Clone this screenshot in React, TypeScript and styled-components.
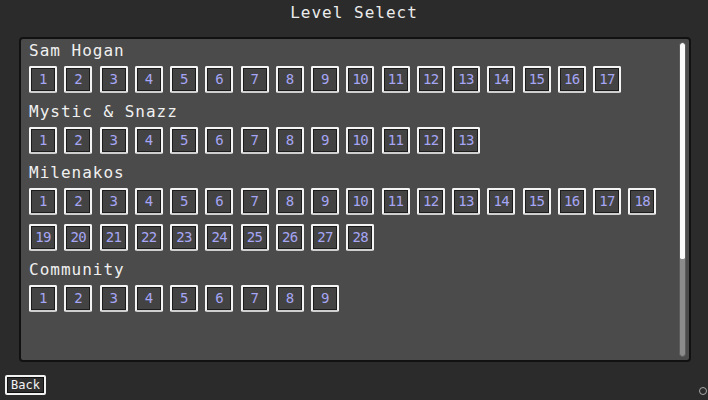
import React from 'react';
import styled, { createGlobalStyle } from 'styled-components';

const GlobalStyle = createGlobalStyle`
  html, body {
    margin: 0;
    padding: 0;
    background: #2b2b2b;
  }
  body {
    width: 708px;
    height: 400px;
    overflow: hidden;
    font-family: "DejaVu Sans Mono", "Liberation Mono", monospace;
  }
`;

const Screen = styled.div`
  position: relative;
  width: 708px;
  height: 400px;
  display: flex;
  flex-direction: column;
  background: #2b2b2b;
`;

const Title = styled.h1`
  margin: 0;
  height: 26px;
  line-height: 26px;
  text-align: center;
  font-size: 16px;
  font-weight: normal;
  letter-spacing: 1px;
  color: #ececec;
`;

const Panel = styled.div`
  box-sizing: border-box;
  margin: 11px 17px 0 19px;
  height: 325px;
  display: flex;
  background: #4b4b4b;
  border: 2px solid #111;
  border-radius: 4px;
`;

const Content = styled.div`
  flex: 1;
  padding: 2px 0 0 8px;
  overflow: hidden;
`;

const Section = styled.section`
  margin-bottom: 9px;
`;

const Heading = styled.h2`
  margin: 0 0 5px;
  height: 20px;
  line-height: 20px;
  font-size: 16px;
  font-weight: normal;
  letter-spacing: 1px;
  color: #f0f0f0;
`;

const Grid = styled.div`
  display: flex;
  flex-wrap: wrap;
  column-gap: 7.25px;
  row-gap: 9px;
  width: 640px;
`;

const LevelButton = styled.button`
  box-sizing: border-box;
  width: 28px;
  height: 27px;
  padding: 0 0 1px;
  display: grid;
  place-items: center;
  background: #434343;
  border: 2px solid #f4f4f4;
  border-bottom-color: #cfcfcf;
  border-radius: 2px;
  box-shadow: inset 0 0 0 1px #1c1c1c;
  color: #a6a6f4;
  font-family: "DejaVu Sans Mono", "Liberation Mono", monospace;
  font-size: 14px;
  letter-spacing: -0.6px;
  line-height: 1;
`;

const ScrollTrack = styled.div`
  width: 7px;
  margin: 3px 3px 3px 0;
  display: flex;
  flex-direction: column;
  background: #8b8b8b;
  border: 1px solid #5c5c5c;
  border-radius: 4px;
  box-sizing: border-box;
  overflow: hidden;
`;

const ScrollThumb = styled.div`
  height: 216px;
  background: #fafafa;
  border-radius: 3px 3px 2px 2px;
`;

const Footer = styled.div`
  display: flex;
  align-items: center;
  padding: 13px 0 0 5px;
`;

const BackButton = styled.button`
  box-sizing: border-box;
  width: 41px;
  height: 20px;
  padding: 0;
  background: #2f2f2f;
  border: 2px solid #f2f2f2;
  border-radius: 2px;
  box-shadow: inset 0 0 0 1px #111;
  color: #f4f4f4;
  font-family: "DejaVu Sans Mono", "Liberation Mono", monospace;
  font-size: 12px;
  line-height: 1;
`;

const Spinner = styled.div`
  position: absolute;
  left: 699px;
  top: 387px;
  width: 6px;
  height: 6px;
  border: 1.5px solid #a8a8a8;
  border-radius: 50%;
`;

const sections = [
  { name: 'Sam Hogan', count: 17 },
  { name: 'Mystic & Snazz', count: 13 },
  { name: 'Milenakos', count: 28 },
  { name: 'Community', count: 9 },
];

const App = () => {
  return (
    <Screen>
      <GlobalStyle />
      <Title>Level Select</Title>
      <Panel>
        <Content>
          {sections.map((s) => (
            <Section key={s.name}>
              <Heading>{s.name}</Heading>
              <Grid>
                {Array.from({ length: s.count }, (_, i) => (
                  <LevelButton key={i}>{i + 1}</LevelButton>
                ))}
              </Grid>
            </Section>
          ))}
        </Content>
        <ScrollTrack>
          <ScrollThumb />
        </ScrollTrack>
      </Panel>
      <Footer>
        <BackButton>Back</BackButton>
      </Footer>
      <Spinner />
    </Screen>
  );
};

export default App;
